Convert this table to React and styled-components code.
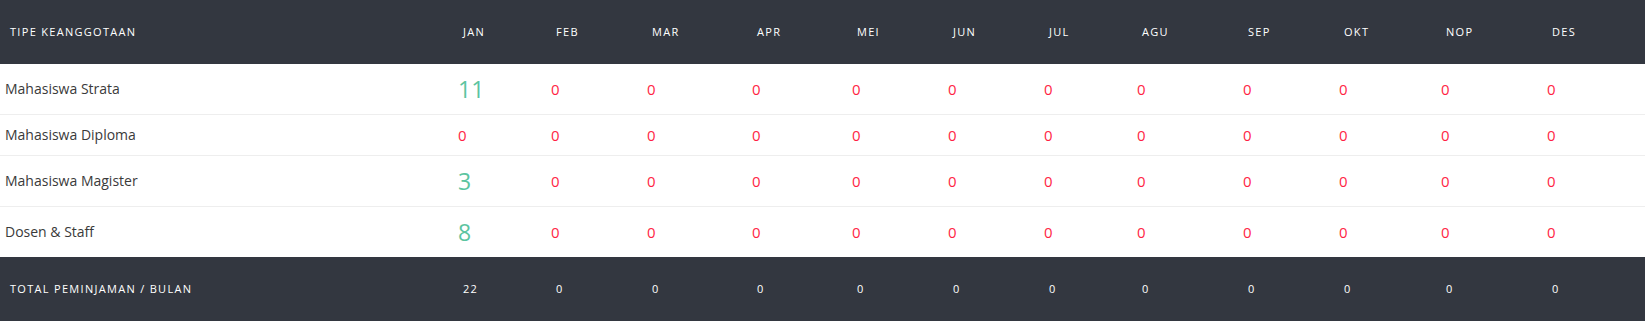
import React from 'react';
import styled, { createGlobalStyle } from 'styled-components';

const months = ['Jan', 'Feb', 'Mar', 'Apr', 'Mei', 'Jun', 'Jul', 'Agu', 'Sep', 'Okt', 'Nop', 'Des'];
const colWidths = [453, 93, 96, 105, 100, 96, 96, 93, 106, 96, 102, 106, 103];

const rows = [
	{ label: 'Mahasiswa Strata', values: [11, 0, 0, 0, 0, 0, 0, 0, 0, 0, 0, 0] },
	{ label: 'Mahasiswa Diploma', values: [0, 0, 0, 0, 0, 0, 0, 0, 0, 0, 0, 0] },
	{ label: 'Mahasiswa Magister', values: [3, 0, 0, 0, 0, 0, 0, 0, 0, 0, 0, 0] },
	{ label: 'Dosen & Staff', values: [8, 0, 0, 0, 0, 0, 0, 0, 0, 0, 0, 0] },
];

const totals = months.map((_, i) => rows.reduce((sum, r) => sum + r.values[i], 0));

const GlobalStyle = createGlobalStyle`
	body {
		margin: 0;
		background: #ffffff;
		font-family: "Open Sans", "Noto Sans", sans-serif;
	}
`;

/**
 * Rekap peminjaman per tipe keanggotaan per bulan
 */
const App = () => (
	<>
		<GlobalStyle />
		<Table>
			<colgroup>
				{colWidths.map((w, i) => (
					<col key={i} style={{ width: w }} />
				))}
			</colgroup>
			<thead>
				<tr>
					<HeadCell>Tipe Keanggotaan</HeadCell>
					{months.map(m => (
						<HeadCell key={m}>{m}</HeadCell>
					))}
				</tr>
			</thead>
			<tbody>
				{rows.map(row => (
					<BodyRow key={row.label}>
						<LabelCell>{row.label}</LabelCell>
						{row.values.map((v, i) => (
							<ValueCell key={i} $filled={v > 0}>
								{v}
							</ValueCell>
						))}
					</BodyRow>
				))}
			</tbody>
			<tfoot>
				<tr>
					<HeadCell>Total Peminjaman / Bulan</HeadCell>
					{totals.map((t, i) => (
						<HeadCell key={i}>{t}</HeadCell>
					))}
				</tr>
			</tfoot>
		</Table>
	</>
);

export default App;

const Table = styled.table`
	width: 1645px;
	table-layout: fixed;
	border-collapse: collapse;
	border-spacing: 0;
`;

const HeadCell = styled.th`
	background-color: #333740;
	color: #ffffff;
	text-align: left;
	font-size: 11px;
	font-weight: 400;
	letter-spacing: 1.3px;
	text-transform: uppercase;
	line-height: 20px;
	padding: 22px 10px;
	white-space: nowrap;
`;

const BodyRow = styled.tr`
	& + & td {
		border-top: 1px solid #eeeeee;
	}
`;

const LabelCell = styled.td`
	padding: 10px 5px;
	font-size: 14px;
	line-height: 20px;
	color: #3a3a3a;
	white-space: nowrap;
`;

const ValueCell = styled.td`
	padding: 10px 5px;
	font-size: ${props => (props.$filled ? '23px' : '15px')};
	line-height: ${props => (props.$filled ? '30px' : '20px')};
	font-weight: 400;
	color: ${props => (props.$filled ? '#5cc4a0' : '#ff1f45')};
`;
